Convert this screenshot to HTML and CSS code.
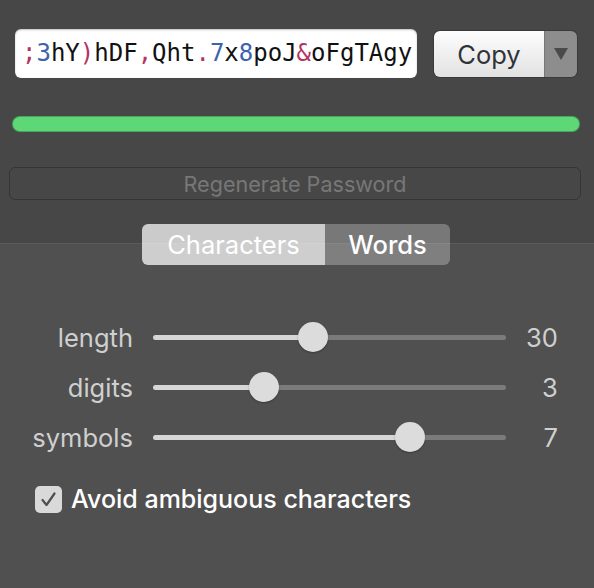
FILE: index.html
```html
<!DOCTYPE html>
<html>
<head>
<meta charset="utf-8">
<link rel="stylesheet" href="styles.css">
</head>
<body>
<div class="app">
  <div class="top-row">
    <div class="pw-field"><span class="sym">;</span><span class="dig">3</span>hY<span class="sym">)</span>hDF<span class="sym">,</span>Qht<span class="sym">.</span><span class="dig">7</span>x<span class="dig">8</span>poJ<span class="sym">&amp;</span>oFgTAgy</div>
    <div class="copy-btn">
      <span class="copy-main">Copy</span>
      <span class="copy-menu"><span class="tri"></span></span>
    </div>
  </div>
  <div class="strength"></div>
  <div class="regen">Regenerate Password</div>
  <div class="seg">
    <span class="seg-item seg-on">Characters</span>
    <span class="seg-item seg-off">Words</span>
  </div>
  <div class="sliders">
    <span class="lbl">length</span>
    <div class="track" style="--v:45.3%"><span class="knob"></span></div>
    <span class="val">30</span>
    <span class="lbl">digits</span>
    <div class="track" style="--v:31.4%"><span class="knob"></span></div>
    <span class="val">3</span>
    <span class="lbl">symbols</span>
    <div class="track" style="--v:72.8%"><span class="knob"></span></div>
    <span class="val">7</span>
  </div>
  <div class="check-row">
    <span class="checkbox"><svg width="27" height="27" viewBox="0 0 27 27"><path d="M7.5 14 L11.5 19 L19.5 7.5" fill="none" stroke="#4e4e4e" stroke-width="2.2" stroke-linecap="round" stroke-linejoin="round"/></svg></span>
    <span class="check-label">Avoid ambiguous characters</span>
  </div>
</div>
</body>
</html>
```

FILE: styles.css
```css
html, body {
  margin: 0;
  padding: 0;
}
body {
  width: 594px;
  height: 588px;
  overflow: hidden;
  background: linear-gradient(to bottom, #474747 0, #474747 243px, #5a5a5a 243px, #5a5a5a 244px, #505050 244px, #505050 100%);
  font-family: Inter, "Open Sans", sans-serif;
}
.app {
  display: flex;
  flex-direction: column;
}
.top-row {
  display: flex;
  align-items: center;
  gap: 17px;
  padding: 29px 0 0 15px;
}
.pw-field {
  box-sizing: border-box;
  width: 402px;
  height: 49px;
  background: #fff;
  border-radius: 6px;
  box-shadow: inset 0 1px 2px rgba(0,0,0,0.25);
  font-family: "DejaVu Sans Mono", monospace;
  font-size: 24px;
  line-height: 49px;
  padding-left: 7px;
  color: #111;
  white-space: nowrap;
  overflow: hidden;
}
.sym { color: #b23462; }
.dig { color: #3d63ae; }
.copy-btn {
  display: flex;
  width: 143px;
  height: 46px;
  border-radius: 6px;
  overflow: hidden;
  box-shadow: 0 0 0 1px #3a3a3a;
}
.copy-main {
  width: 110px;
  display: flex;
  align-items: center;
  justify-content: center;
  background: linear-gradient(to bottom, #fdfdfd, #e2e2e2);
  color: #2f3338;
  font-size: 25.5px;
  padding-top: 1px;
}
.copy-menu {
  flex: 1;
  display: flex;
  align-items: center;
  justify-content: center;
  background: #8d8d8d;
  border-left: 1px solid #777;
}
.tri {
  width: 0;
  height: 0;
  border-left: 7px solid transparent;
  border-right: 7px solid transparent;
  border-top: 12px solid #4a4a4a;
}
.strength {
  margin: 39px 15px 0 13px;
  height: 14px;
  border-radius: 7px;
  background: #5ed776;
  box-shadow: 0 0 0 1px #4aa55f;
}
.regen {
  margin: 36px 13px 0 9px;
  height: 33px;
  box-sizing: border-box;
  border: 1px solid #353535;
  border-radius: 6px;
  color: #777;
  font-size: 21.6px;
  display: flex;
  align-items: center;
  justify-content: center;
  padding-top: 1px;
}
.seg {
  align-self: flex-start;
  margin: 24px 0 0 142px;
  display: flex;
  height: 41px;
  border-radius: 6px;
  overflow: hidden;
}
.seg-item {
  display: flex;
  align-items: center;
  justify-content: center;
  color: #fff;
  font-size: 25.5px;
}
.seg-on {
  width: 183px;
  background: rgba(255,255,255,0.72);
}
.seg-off {
  width: 125px;
  background: rgba(255,255,255,0.27);
  font-weight: 500;
}
.sliders {
  margin-top: 47px;
  display: grid;
  grid-template-columns: 113px 353px 1fr;
  grid-auto-rows: 50px;
  column-gap: 20px;
  align-items: center;
  padding: 0 39px 0 20px;
}
.lbl {
  justify-self: end;
  color: #cfcfcf;
  font-size: 25.5px;
}
.val {
  justify-self: end;
  color: #cfcfcf;
  font-size: 25.5px;
}
.track {
  position: relative;
  height: 5px;
  border-radius: 3px;
  background: linear-gradient(to right, #d6d6d6 0, #d6d6d6 var(--v), #7b7b7b var(--v), #7b7b7b 100%);
}
.knob {
  position: absolute;
  left: var(--v);
  top: 50%;
  width: 30px;
  height: 30px;
  margin: -15px 0 0 -15px;
  border-radius: 50%;
  background: #dcdcdc;
  box-shadow: 0 1px 2px rgba(0,0,0,0.3);
}
.check-row {
  display: flex;
  align-items: center;
  gap: 9px;
  margin: 22px 0 0 35px;
}
.checkbox {
  width: 27px;
  height: 27px;
  border-radius: 5px;
  background: #d9d9d9;
  display: flex;
}
.check-label {
  color: #fff;
  font-size: 25px;
  font-weight: 500;
}
```
